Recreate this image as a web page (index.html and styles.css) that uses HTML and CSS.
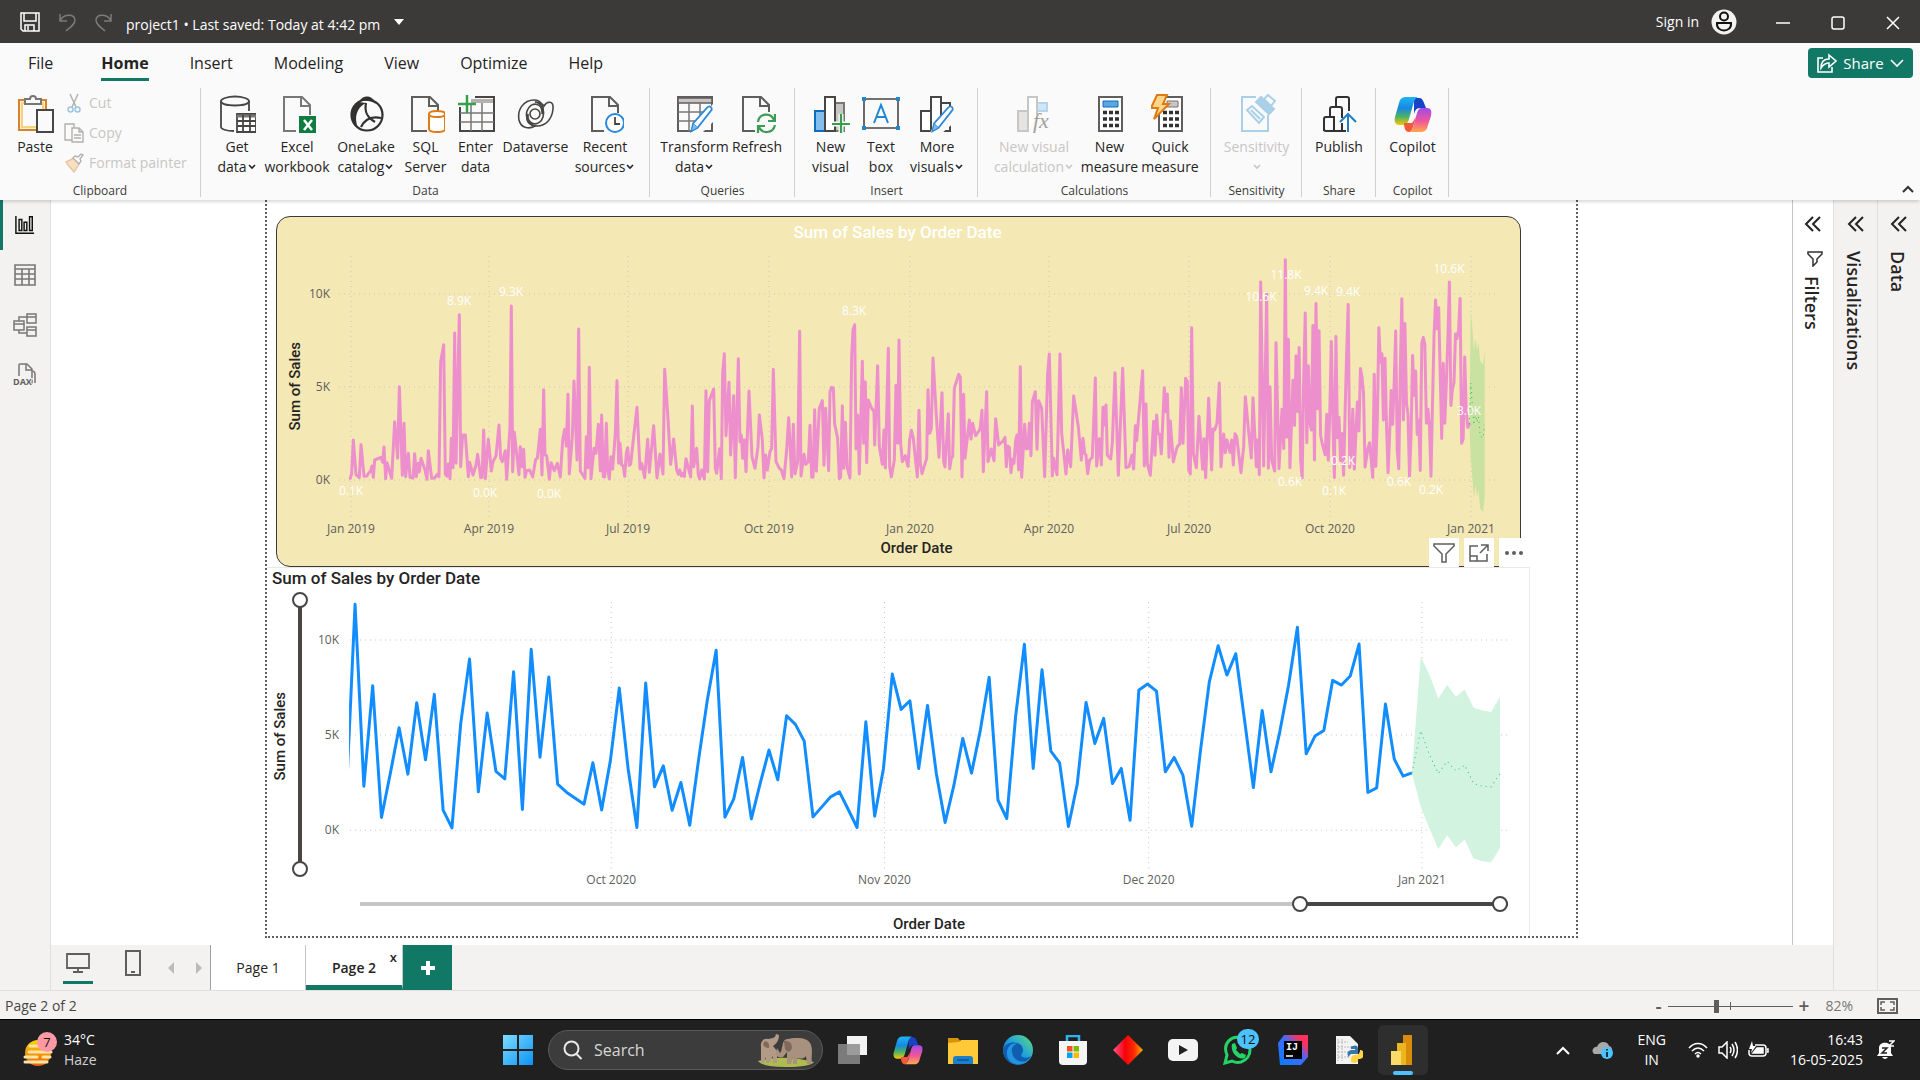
FILE: index.html
```html
<!DOCTYPE html>
<html lang="en">
<head>
<meta charset="utf-8">
<title>project1</title>
<link rel="stylesheet" href="styles.css">
</head>
<body>
<svg class="defs" aria-hidden="true">
  <defs>
    <linearGradient id="cpBlue" x1="0" y1="0" x2="0" y2="1"><stop offset="0" stop-color="#1fb4f5"/><stop offset=".4" stop-color="#1788e0"/><stop offset=".7" stop-color="#4bb265"/><stop offset="1" stop-color="#f8c800"/></linearGradient>
    <linearGradient id="cpPink" x1="0" y1="0" x2="0" y2="1"><stop offset="0" stop-color="#a04be8"/><stop offset=".55" stop-color="#f0569b"/><stop offset="1" stop-color="#ffa94a"/></linearGradient>
    <linearGradient id="edgeG" x1="0" y1="1" x2="1" y2="0"><stop offset="0" stop-color="#0c59a4"/><stop offset=".5" stop-color="#1e9de0"/><stop offset="1" stop-color="#5fe07a"/></linearGradient>
    <linearGradient id="winG" x1="0" y1="0" x2="1" y2="1"><stop offset="0" stop-color="#7fdcff"/><stop offset="1" stop-color="#0a93f5"/></linearGradient>
    <linearGradient id="redG"><stop offset="0" stop-color="#ff5a8a"/><stop offset=".4" stop-color="#f5000c"/><stop offset=".7" stop-color="#ff2a00"/><stop offset="1" stop-color="#ffb000"/></linearGradient>
    <linearGradient id="ijG" x1="0" y1="1" x2="1" y2="0"><stop offset="0" stop-color="#087cfa"/><stop offset=".55" stop-color="#3f6bff"/><stop offset=".8" stop-color="#fe315d"/></linearGradient>
    <linearGradient id="hazeG" x1="0" y1="0" x2="0" y2="1"><stop offset="0" stop-color="#ffd400"/><stop offset="1" stop-color="#e8620c"/></linearGradient>
    <symbol id="copilot" viewBox="0 0 38 38">
      <path d="M20 3h5c3 0 4 2 5 5l2 5h-6c-4 0-5 3-6 6z" fill="#1743c8"/>
      <path d="M12 2h12c-3 1-4 4-5 8l-4 14c-1 4-3 6-7 6H5c-4 0-5-4-4-8L5 8c1-4 3-6 7-6z" fill="url(#cpBlue)"/>
      <path d="M10 28h8l4-6-3 10c-1 3-2 5-4 5-4 0-5-5-5-9z" fill="#f4583c"/>
      <path d="M28 13h5c4 0 5 3 4 8l-3 9c-1 5-3 7-7 7H15c3-1 4-4 5-8l3-11c1-3 2-5 5-5z" fill="url(#cpPink)"/>
    </symbol>
    <symbol id="chev" viewBox="0 0 10 8"><path d="M2 2l3 3 3-3" fill="none" stroke="currentColor" stroke-width="1.600"/></symbol>
    <symbol id="collapse" viewBox="0 0 18 18"><path d="M9 2L2 9l7 7M16 2L9 9l7 7" fill="none" stroke="currentColor" stroke-width="2"/></symbol>
    <symbol id="pencil" viewBox="0 0 26 32"><path d="M2 30l2-9L20 3q3-3 5 0 1 2-1 4L9 26z" fill="#fff" stroke="#2b88d8" stroke-width="2"/><path d="M2 30l2-9 5 5z" fill="#7cbdec" stroke="#2b88d8"/></symbol>
  </defs>
</svg>

<header class="titlebar">
  <button class="tb-icon" aria-label="Save"><svg width="20" height="20" viewBox="0 0 20 20" fill="none" stroke="#fff" stroke-width="1.5"><path d="M1 1h18v18H3l-2-2zM4 1v8h12V1M5 19v-6h9v6M8 14v4"/></svg></button>
  <button class="tb-icon" aria-label="Undo"><svg width="18" height="20" viewBox="0 0 18 20" fill="none" stroke="#7d7b79" stroke-width="1.5"><path d="M2 2v7h7M2 9c3-7 14-8 15-1 0 4-4 7-9 11"/></svg></button>
  <button class="tb-icon" aria-label="Redo"><svg width="18" height="20" viewBox="0 0 18 20" fill="none" stroke="#7d7b79" stroke-width="1.5"><path d="M16 2v7H9M16 9C13 2 2 1 1 8c0 4 4 7 9 11"/></svg></button>
  <span class="doc-name">project1 • Last saved: Today at 4:42 pm</span>
  <svg width="10" height="6"><path d="M0 0h10L5 6z" fill="#fff"/></svg>
  <span class="grow"></span>
  <a class="signin" href="#">Sign in</a>
  <svg width="26" height="26" viewBox="0 0 26 26"><circle cx="13" cy="13" r="12.5" fill="#f3f2f1"/><circle cx="13" cy="7.500" r="4" fill="none" stroke="#111" stroke-width="2"/><path d="M6 14h14c1 10-15 10-14 0z" fill="none" stroke="#111" stroke-width="2"/></svg>
  <div class="win-buttons">
    <button aria-label="Minimize"><svg width="14" height="14"><path d="M0 7h14" stroke="#fff" stroke-width="1.500"/></svg></button>
    <button aria-label="Maximize"><svg width="14" height="14"><rect x="1" y="1" width="12" height="12" rx="2" fill="none" stroke="#fff" stroke-width="1.500"/></svg></button>
    <button aria-label="Close"><svg width="14" height="14"><path d="M1 1l12 12M13 1L1 13" stroke="#fff" stroke-width="1.500"/></svg></button>
  </div>
</header>

<nav class="menu">
  <a href="#">File</a><a href="#" class="active">Home</a><a href="#">Insert</a><a href="#">Modeling</a><a href="#">View</a><a href="#">Optimize</a><a href="#">Help</a>
  <span class="grow"></span>
  <button class="share"><svg width="20" height="20" viewBox="0 0 20 20" fill="none" stroke="#fff" stroke-width="1.600"><path d="M6 5H1v14h14v-5"/><path d="M12 2l7 6-7 6v-4c-4 0-6 2-8 5 0-6 3-9 8-9z"/></svg>Share<svg width="14" height="9" viewBox="0 0 14 9"><path d="M1 1l6 6 6-6" fill="none" stroke="#fff" stroke-width="1.600"/></svg></button>
</nav>

<section class="ribbon">
  <div class="group clipboard">
    <div class="tools">
      <button class="tool"><svg viewBox="0 0 38 38"><path d="M3 5h27v30H3z" fill="#fdf0cf" stroke="#d9822b" stroke-width="2"/><path d="M6 8h21v24H6z" fill="#fafafa" stroke="#f5d27f" stroke-width="2"/><path d="M9 9V4h5c0-4 6-4 6 0h5v5z" fill="#fafafa" stroke="#797775" stroke-width="2"/><path d="M21 15h16v22H21z" fill="#fafafa" stroke="#484644" stroke-width="2"/></svg>Paste</button>
      <div class="small-tools">
        <button class="small-tool"><svg viewBox="0 0 20 20" fill="none"><path d="M6 1l6 13M14 1L8 14" stroke="#b3b0ad" stroke-width="1.500"/><circle cx="6.500" cy="16.500" r="2.500" stroke="#9cc5e2" stroke-width="1.500"/><circle cx="13.500" cy="16.500" r="2.500" stroke="#9cc5e2" stroke-width="1.500"/></svg>Cut</button>
        <button class="small-tool"><svg viewBox="0 0 20 20" fill="#fafafa" stroke="#b3b0ad" stroke-width="1.400"><path d="M1 1h9v16H1z"/><path d="M8 5h7l4 4v10H8zM15 5v4h4M10 12h7M10 15h7"/></svg>Copy</button>
        <button class="small-tool"><svg viewBox="0 0 20 20" fill="none" stroke="#b3b0ad" stroke-width="1.400"><path d="M2 9l8-4 5 6-5 8C8 16 4 13 2 9z" fill="#f8dfc3" stroke="#e8c49c"/><path d="M9 5l6 6 2-3-1-2 3-4-2-1-3 3-3-1z" fill="#fafafa"/></svg>Format painter</button>
      </div>
    </div>
    <h2>Clipboard</h2>
  </div>
  <div class="group">
    <div class="tools">
      <button class="tool w52"><svg viewBox="0 0 38 38" fill="none" stroke="#484644" stroke-width="1.800"><path d="M16 36C8 36 3 34 3 32V6c0-2 6-4.500 14-4.500S31 4 31 6v10"/><path d="M3 6c0 6 28 6 28 0" /><path d="M19 19h19v18H19z" fill="#fff"/><path d="M19 21h19" stroke="#797775" stroke-width="3"/><path d="M19 26h19M19 31h19M25 20v17M32 20v17"/></svg>Get<span>data<svg class="chev"><use href="#chev"/></svg></span></button>
      <button class="tool w68"><svg viewBox="0 0 38 38"><path d="M18 36H6V2h18l8 8v10M23 2v9h9" fill="none" stroke="#797775" stroke-width="2"/><path d="M21 21h18v17H21z" fill="#107c41"/><path d="M26 25l8 10M34 25l-8 10" stroke="#fff" stroke-width="2.500"/></svg>Excel<span>workbook</span></button>
      <button class="tool w70"><svg viewBox="0 0 38 38"><circle cx="20" cy="20" r="15.500" fill="none" stroke="#323130" stroke-width="2.200"/><path d="M12 7c4-8 14-7 17 2-6-4-12-4-17-2zM12 7C3 13 2 28 11 33c-4-10-2-20 8-25z" fill="#323130"/><path d="M19 8c-2 10 2 15 9 19M14 32c4-8 11-11 20-9" fill="none" stroke="#323130" stroke-width="2.200"/></svg>OneLake<span>catalog<svg class="chev"><use href="#chev"/></svg></span></button>
      <button class="tool w49"><svg viewBox="0 0 38 38"><path d="M20 36H5V2h18l8 8v6M22 2v9h9" fill="none" stroke="#605e5c" stroke-width="2"/><path d="M22 19v15c0 4 16 4 16 0V19c0-4-16-4-16 0zc0 4 16 4 16 0" fill="#fff" stroke="#e07a12" stroke-width="2"/></svg>SQL<span>Server</span></button>
      <button class="tool w51"><svg viewBox="0 0 38 38"><path d="M3 12v24h34V2H18" fill="none" stroke="#484644" stroke-width="2"/><path d="M14 4h22v4H14z" fill="#b3b0ad"/><path d="M3 18h34M3 27h34M14 10v26M25 8v28" fill="none" stroke="#797775" stroke-width="1.500"/><path d="M10 0v18M1 9h18" stroke="#359f4c" stroke-width="2.500"/></svg>Enter<span>data</span></button>
      <button class="tool w69"><svg viewBox="0 0 38 38" fill="none" stroke="#484644" stroke-width="1.600"><circle cx="18" cy="19" r="5"/><path d="M25 19C26 7 13 6 10 16c-2 7 2 14 8 15C13 34 4 34 2 25 0 14 7 5 17 5c8 0 11 8 8 14z"/><path d="M11 19c-1 12 12 13 15 3 2-7-2-14-8-15 3 0 7 1 9 4 3-5 10-6 9 3-1 10-7 17-16 17-8 0-12-5-9-12z"/></svg>Dataverse</button>
      <button class="tool w70"><svg viewBox="0 0 38 38"><path d="M18 36H6V2h18l8 8v8M23 2v9h9" fill="none" stroke="#605e5c" stroke-width="2"/><circle cx="29" cy="28" r="9" fill="#fff" stroke="#2b88d8" stroke-width="2"/><path d="M29 22v7h5" fill="none" stroke="#484644" stroke-width="1.800"/></svg>Recent<span>sources<svg class="chev"><use href="#chev"/></svg></span></button>
    </div>
    <h2>Data</h2>
  </div>
  <div class="group">
    <div class="tools">
      <button class="tool w69"><svg viewBox="0 0 38 38"><path d="M2 2h34v34H2z" fill="none" stroke="#605e5c" stroke-width="2"/><path d="M2 3h34v5H2z" fill="#c8c6c4" stroke="#605e5c" stroke-width="1.500"/><path d="M2 17h34M2 26h30M13 8v28M24 8v28" stroke="#797775" stroke-width="1.500"/><path d="M14 38l5-10 18-19v18L26 38z" fill="#fafafa"/><use href="#pencil" x="12" y="10" width="26" height="28"/></svg>Transform<span>data<svg class="chev"><use href="#chev"/></svg></span></button>
      <button class="tool w56"><svg viewBox="0 0 38 38"><path d="M17 36H5V2h18l8 8v7M22 2v9h9" fill="none" stroke="#605e5c" stroke-width="2"/><path d="M20 27c1-9 13-10 16-2M37 30c-2 9-13 9-16 2" fill="none" stroke="#3e9b55" stroke-width="2.200"/><path d="M37 19v7h-7M20 38v-7h7" fill="none" stroke="#3e9b55" stroke-width="2.200"/></svg>Refresh</button>
    </div>
    <h2>Queries</h2>
  </div>
  <div class="group">
    <div class="tools">
      <button class="tool w51"><svg viewBox="0 0 38 38"><path d="M3 16h10v20H3z" fill="#83beec" stroke="#0f6cbd" stroke-width="2"/><path d="M23 8h9v28h-9z" fill="#c8c6c4" stroke="#797775" stroke-width="2"/><path d="M13 2h10v34H13z" fill="#fff" stroke="#484644" stroke-width="2"/><path d="M29 19v19M20 29h18" stroke="#fafafa" stroke-width="5"/><path d="M29 19v19M20 29h18" stroke="#359f4c" stroke-width="2.200"/></svg>New<span>visual</span></button>
      <button class="tool w50"><svg viewBox="0 0 38 38"><path d="M2 4h34v29H2z" fill="none" stroke="#484644" stroke-width="1.600"/><path d="M0 2h4v4H0zM34 2h4v4h-4zM0 31h4v4H0zM34 31h4v4h-4z" fill="#1f87d1"/><path d="M12 28l7-18 7 18M14 22h10" fill="none" stroke="#1f87d1" stroke-width="2"/></svg>Text<span>box</span></button>
      <button class="tool w62"><svg viewBox="0 0 38 38"><path d="M3 16h10v20H3zM13 2h10v34H13zM23 8h9v28h-9z" fill="#fff" stroke="#484644" stroke-width="2"/><path d="M12 38l5-10 20-19v18L24 38z" fill="#fafafa"/><use href="#pencil" x="11" y="10" width="26" height="28"/></svg>More<span>visuals<svg class="chev"><use href="#chev"/></svg></span></button>
    </div>
    <h2>Insert</h2>
  </div>
  <div class="group">
    <div class="tools">
      <button class="tool w92" disabled><svg viewBox="0 0 38 38"><path d="M3 16h10v20H3z" fill="#e6e4e2" stroke="#c8c6c4" stroke-width="2"/><path d="M22 8h10v8H22z" fill="#cfe4f5" stroke="#b5d5ec" stroke-width="2"/><path d="M13 36V2h9v18" fill="#fff" stroke="#c8c6c4" stroke-width="2"/><text x="18" y="33" class="fx">fx</text></svg>New visual<span>calculation<svg class="chev"><use href="#chev"/></svg></span></button>
      <button class="tool w59"><svg viewBox="0 0 38 38"><path d="M8 2h23v34H8z" fill="#fff" stroke="#605e5c" stroke-width="2"/><path d="M12 6h15v6H12z" fill="#5ba7e4" stroke="#0f6cbd"/><path d="M12 17.500h16M12 24h16M12 30.500h16" stroke="#323130" stroke-width="3.500" stroke-dasharray="4 2"/></svg>New<span>measure</span></button>
      <button class="tool w62"><svg viewBox="0 0 38 38"><path d="M8 2h23v34H8z" fill="#fff" stroke="#605e5c" stroke-width="2"/><path d="M16 6h11v6H16z" fill="#c8c6c4" stroke="#797775"/><path d="M12 17.500h16M12 24h16M12 30.500h16" stroke="#323130" stroke-width="3.500" stroke-dasharray="4 2"/><path d="M6 0h10l-4 9h6L3 24l4-11H0z" fill="#fdd68a" stroke="#e07a12" stroke-width="2"/></svg>Quick<span>measure</span></button>
    </div>
    <h2>Calculations</h2>
  </div>
  <div class="group">
    <div class="tools">
      <button class="tool w71" disabled><svg viewBox="0 0 38 38" fill="none" stroke="#a9d0e8" stroke-width="2"><path d="M18 2H4v34h26V20"/><path d="M9 15l5-4 12 11-5 6zM13 15l9 9"/><path d="M18 7l5-5 13 12-5 5z" fill="#a9d0e8"/><path d="M26 4l4-4 7 6-4 5z" fill="#fafafa"/></svg>Sensitivity<span><svg class="chev"><use href="#chev"/></svg></span></button>
    </div>
    <h2>Sensitivity</h2>
  </div>
  <div class="group">
    <div class="tools">
      <button class="tool w54"><svg viewBox="0 0 38 38" fill="none" stroke="#323130" stroke-width="2"><path d="M4 36V24q0-2 2-2h8v14H6q-2 0-2-2M10 22V14q0-2 2-2h8q2 0 2 2v9M16 12V4q0-2 2-2h9q2 0 2 2v12M6 36h20M14 22v14M22 28v8"/><path d="M28 37V19M20 27l8-8 8 8" stroke="#1f7fc0"/></svg>Publish</button>
    </div>
    <h2>Share</h2>
  </div>
  <div class="group">
    <div class="tools">
      <button class="tool w53"><svg><use href="#copilot"/></svg>Copilot</button>
    </div>
    <h2>Copilot</h2>
  </div>
  <button class="ribbon-toggle" aria-label="Collapse ribbon"><svg width="12" height="8"><path d="M1 7l5-5 5 5" fill="none" stroke="#323130" stroke-width="2"/></svg></button>
</section>

<main class="workspace">
  <aside class="rail">
    <button class="active" aria-label="Report view"><svg viewBox="0 0 22 22" width="20" height="20" fill="none" stroke="#111" stroke-width="1.600"><path d="M1 1v19h20M4.500 17V5h3v12zM10 17V8h3v9zM16 17V2h3v15z"/></svg></button>
    <button aria-label="Table view"><svg viewBox="0 0 22 22" width="22" height="22" fill="none" stroke="#797775" stroke-width="1.600"><path d="M1 1h20v20H1zM1 5h20M1 10h20M1 15h20M8 5v16M15 5v16"/></svg></button>
    <button aria-label="Model view"><svg viewBox="0 0 24 24" width="24" height="24" fill="none" stroke="#797775" stroke-width="1.500"><path d="M1 8h10v9H1zM1 11h10M14 1h9v9h-9zM14 4h9M14 14h9v9h-9zM14 17h9M6 8V4h8M6 17v3h8"/></svg></button>
    <button aria-label="DAX query view"><svg viewBox="0 0 24 24" width="24" height="24" fill="none" stroke="#797775" stroke-width="1.500"><path d="M6 13V2q0-1 1-1h7l5 5v13q0 2-2 2M13 1v6h6M20 8q2 1 2 3v9"/><text x="0" y="22" class="dax">DAX</text></svg></button>
  </aside>

  <div class="center">
    <div class="canvas">
      <div class="report">
        <article class="visual top">
          <h3>Sum of Sales by Order Date</h3>
          <div class="plot-row">
            <span class="y-title">Sum of Sales</span>
            <svg class="plot" id="fullChart" viewBox="310 244 1200 294">
              <g class="grid">
                <path d="M339 294H1495M339 387H1495M339 480H1495M351 256V518M489 256V518M628 256V518M769 256V518M910 256V518M1049 256V518M1189 256V518M1330 256V518M1471 256V518"/>
              </g>
              <g transform="translate(260 240) scale(.33333)">
                <polygon id="fullBand" class="band dim"/>
                <polyline id="fullLine" class="pink"/>
                <polyline id="fullMid" class="mid wide"/>
              </g>
              <g class="ticks end"><text x="330" y="298">10K</text><text x="330" y="391">5K</text><text x="330" y="484">0K</text></g>
              <g class="ticks"><text x="351" y="533">Jan 2019</text><text x="489" y="533">Apr 2019</text><text x="628" y="533">Jul 2019</text><text x="769" y="533">Oct 2019</text><text x="910" y="533">Jan 2020</text><text x="1049" y="533">Apr 2020</text><text x="1189" y="533">Jul 2020</text><text x="1330" y="533">Oct 2020</text><text x="1471" y="533">Jan 2021</text></g>
              <g class="ticks white"><text x="351" y="495">0.1K</text><text x="459" y="305">8.9K</text><text x="511" y="296">9.3K</text><text x="485" y="497">0.0K</text><text x="549" y="498">0.0K</text><text x="854" y="315">8.3K</text><text x="1261" y="301">10.6K</text><text x="1286" y="279">11.8K</text><text x="1316" y="295">9.4K</text><text x="1348" y="296">9.4K</text><text x="1449" y="273">10.6K</text><text x="1469" y="415">3.0K</text><text x="1343" y="465">0.2K</text><text x="1290" y="486">0.6K</text><text x="1334" y="495">0.1K</text><text x="1399" y="486">0.6K</text><text x="1431" y="494">0.2K</text></g>
            </svg>
          </div>
          <p class="x-title">Order Date</p>
        </article>

        <article class="visual bottom">
          <div class="visual-tools">
            <button aria-label="Filters"><svg viewBox="0 0 22 20" width="22" height="20"><path d="M1 1h20v2l-8 8v8H9v-8L1 3z"/></svg></button>
            <button aria-label="Focus mode"><svg viewBox="0 0 20 18" width="20" height="18"><path d="M9 2H1v15h17v-7M1 12h7v5M12 1h7v6M19 1l-8 8"/></svg></button>
            <button aria-label="More options"><svg viewBox="0 0 20 6" width="20" height="6" class="dots"><circle cx="3" cy="3" r="2"/><circle cx="10" cy="3" r="2"/><circle cx="17" cy="3" r="2"/></svg></button>
          </div>
          <h3>Sum of Sales by Order Date</h3>
          <div class="plot-row">
            <span class="y-title">Sum of Sales</span>
            <div class="dual vertical">
              <input type="range" min="0" max="100" value="0" aria-label="Lowest sales shown">
              <input type="range" min="0" max="100" value="100" aria-label="Highest sales shown">
            </div>
            <svg class="plot" viewBox="312 591 1200 297">
              <defs><clipPath id="plotClip"><path d="M349 591H1512V888H349z"/></clipPath></defs>
              <g class="grid"><path d="M350 640H1510M350 735H1510M350 830H1510M611 602V869M884 602V869M1148 602V869M1421 602V869"/></g>
              <polygon id="zoomBand" class="band"/>
              <polyline id="zoomLine" class="blue" clip-path="url(#plotClip)"/>
              <polyline id="zoomMid" class="mid"/>
              <g class="ticks end"><text x="339" y="644">10K</text><text x="339" y="739">5K</text><text x="339" y="834">0K</text></g>
              <g class="ticks"><text x="611" y="884">Oct 2020</text><text x="884" y="884">Nov 2020</text><text x="1148" y="884">Dec 2020</text><text x="1421" y="884">Jan 2021</text></g>
            </svg>
          </div>
          <div class="dual horizontal">
            <input type="range" min="0" max="1000" value="823" aria-label="First date shown">
            <input type="range" min="0" max="1000" value="1000" aria-label="Last date shown">
          </div>
          <p class="x-title">Order Date</p>
        </article>
      </div>
      <aside class="filters">
        <button aria-label="Expand filters"><svg width="18" height="18"><use href="#collapse"/></svg></button>
        <svg width="16" height="16" viewBox="0 0 16 16" class="funnel"><path d="M1 1h14v2l-5 5v3l-4 4V8L1 3z" fill="none" stroke="#323130" stroke-width="1.500"/></svg>
        <h2>Filters</h2>
      </aside>
    </div>
    <div class="page-bar">
      <button class="device active" aria-label="Desktop layout"><svg width="24" height="20" viewBox="0 0 24 20" fill="none" stroke="#605e5c" stroke-width="1.800"><path d="M1 1h22v14H1zM12 15v4M7 19h10"/></svg></button>
      <button class="device" aria-label="Mobile layout"><svg width="16" height="26" viewBox="0 0 16 26" fill="none" stroke="#605e5c" stroke-width="2"><path d="M1 1h14v24H1zM6 22h4"/></svg></button>
      <button class="arrow" aria-label="Previous page"><svg width="6" height="12"><path d="M6 0v12L0 6z" fill="#bdbbb9"/></svg></button>
      <button class="arrow" aria-label="Next page"><svg width="6" height="12"><path d="M0 0v12l6-6z" fill="#bdbbb9"/></svg></button>
      <button class="page">Page 1</button>
      <div class="page current"><button>Page 2</button><button class="close" aria-label="Delete page">x</button></div>
      <button class="add" aria-label="New page"><svg width="14" height="14"><path d="M7 0v14M0 7h14" stroke="#fff" stroke-width="4"/></svg></button>
    </div>
  </div>
  <aside class="pane">
    <button aria-label="Expand visualizations"><svg width="18" height="18"><use href="#collapse"/></svg></button>
    <h2>Visualizations</h2>
  </aside>
  <aside class="pane last">
    <button aria-label="Expand data"><svg width="18" height="18"><use href="#collapse"/></svg></button>
    <h2>Data</h2>
  </aside>
</main>

<footer class="status">
  <span>Page 2 of 2</span>
  <span class="grow"></span>
  <button aria-label="Zoom out">-</button>
  <input class="zoom" type="range" min="10" max="200" value="83" aria-label="Zoom">
  <button aria-label="Zoom in">+</button>
  <span class="pct">82%</span>
  <button aria-label="Fit to page"><svg width="21" height="16" viewBox="0 0 21 16" fill="none" stroke="#605e5c"><path d="M1 1h19v14H1z" stroke-width="2"/><path d="M4 7V4h4M13 4h4v3M17 9v3h-4M8 12H4V9" stroke-width="1.500"/></svg></button>
</footer>

<div class="taskbar">
  <div class="weather">
    <svg width="38" height="38" viewBox="0 0 38 38"><circle cx="15" cy="22" r="13" fill="url(#hazeG)"/><path d="M7 15h8M6 21h22M2 26h12M20 26h7M2 31h22" stroke="#fde3a7" stroke-width="3" stroke-linecap="round"/><circle cx="24" cy="11" r="10" fill="#ff99a4"/><text x="24" y="16" class="badge-text">7</text></svg>
    <div><b>34°C</b><span>Haze</span></div>
  </div>
  <div class="apps">
    <button aria-label="Start"><svg viewBox="0 0 30 30"><path d="M0 0h14v14H0zM16 0h14v14H16zM0 16h14v14H0zM16 16h14v14H16z" fill="url(#winG)"/></svg></button>
    <label class="search">
      <svg width="20" height="20" viewBox="0 0 20 20" fill="none" stroke="#e8e8e8" stroke-width="2"><circle cx="8.500" cy="8.500" r="7"/><path d="M13.500 14l5 5"/></svg>
      <input type="text" placeholder="Search" aria-label="Search">
      <svg width="56" height="34" viewBox="0 0 56 34"><path d="M0 28q26-7 56 1-4 5-28 5T0 28z" fill="#aebb4f"/><path d="M3 29V14C2 8 6 5 10 6c4-1 7 0 8-5l3 1c0 6-3 9-6 11l4 5v12h-4v-7l-4 7H8v-6l-2 6z" fill="#b39a87"/><path d="M29 31V19l-4 5q-6 2-7-4l1-5 3 5c3-2 1-13 7-14 9-2 22-2 24 6 2 6 0 10 1 19h-5l-1-8c-2 3-6 3-9 2v6h-4v-7l-2 7z" fill="#a8917f"/><path d="M26 8q8-1 8 7-3 7-7 1zM7 8q5 1 4 7-5 0-6-4z" fill="#81695a"/></svg>
    </label>
    <button aria-label="Task view"><svg viewBox="0 0 30 30"><path d="M9 1h20v19H9z" fill="#f3f3f3"/><path d="M0 9h22v20H0z" fill="#8c8c8c" opacity=".85"/></svg></button>
    <button aria-label="Copilot"><svg><use href="#copilot"/></svg></button>
    <button aria-label="File Explorer"><svg viewBox="0 0 30 30"><path d="M0 3h10l3 4v5H0z" fill="#d9930a"/><path d="M0 8l11-1 2-2h17v24H0z" fill="#ffc938"/><path d="M5 29v-5q0-3 3-3h14q3 0 3 3v5z" fill="#1c7fcb"/><path d="M9 25h12" stroke="#0b5696" stroke-width="1.500"/></svg></button>
    <button aria-label="Edge"><svg viewBox="0 0 30 30"><circle cx="15" cy="15" r="15" fill="url(#edgeG)"/><path d="M0 15C2 5 20 5 20 15c0 3-2 4-2 5 0 3 6 4 10 1-8 13-28 9-28-6z" fill="#0f5eb0"/><path d="M9 17c1 8 8 11 15 9-7 6-19 3-20-6-1-8 5-13 10-11-4 1-6 4-5 8z" fill="#2394df"/></svg></button>
    <button aria-label="Store"><svg viewBox="0 0 30 30"><path d="M9 7V1h12v6" fill="none" stroke="#2fb3f0" stroke-width="2.500"/><path d="M1 6h28v20q0 4-4 4H5q-4 0-4-4z" fill="#f5f5f5"/><path d="M9 11h5.500v5.500H9z" fill="#f25022"/><path d="M15.500 11H21v5.500h-5.500z" fill="#7fba00"/><path d="M9 17.500h5.500V23H9z" fill="#00a4ef"/><path d="M15.500 17.500H21V23h-5.500z" fill="#ffb900"/></svg></button>
    <button aria-label="Diamond"><svg viewBox="0 0 30 30"><path d="M15 0l15 15-15 15L0 15z" fill="url(#redG)"/></svg></button>
    <button aria-label="YouTube"><svg viewBox="0 0 30 30"><rect y="4" width="30" height="22" rx="5" fill="#f4f4f4"/><path d="M11 10l9 5-9 5z" fill="#222"/></svg></button>
    <button class="wa" aria-label="WhatsApp"><svg viewBox="0 0 30 30"><path d="M2 28l2-8C-1 8 9 0 18 3c12 4 12 20 0 24-4 1-7 0-9-1z" fill="none" stroke="#25d366" stroke-width="3"/><path d="M9 9l3-1 2 5-1 2 4 4 2-1 4 2-1 3c-7 3-15-6-13-14z" fill="#25d366"/></svg><i>12</i></button>
    <button aria-label="IntelliJ IDEA"><svg viewBox="0 0 30 30"><path d="M0 8l6-8h24v22l-7 8H2z" fill="url(#ijG)"/><path d="M6 6h18v18H6z" fill="#000"/><text x="8" y="15" class="ij">IJ</text><path d="M8 21h7" stroke="#fff" stroke-width="1.500"/></svg></button>
    <button aria-label="Python"><svg viewBox="0 0 30 30"><path d="M3 1h14l8 8v20H3z" fill="#f3f3f3"/><path d="M5 4v22M9 4v22M5 7h10M5 12h15M5 17h10M5 22h10" stroke="#bbb" stroke-dasharray="2 1"/><path d="M20 11q5-2 5 3v5h-6q-3 0-3 4-4-7 2-8h4v-1h-4q-1-3 2-3z" fill="#3776ab"/><path d="M27 15q5 0 3 7-1 2-5 2 1 3-3 4-5 0-4-4 0-4 4-4 5 0 5-5z" fill="#ffd343"/></svg></button>
    <button class="running" aria-label="Power BI"><svg viewBox="0 0 30 30"><path d="M15 0h9v30h-9z" fill="#d98c0b"/><path d="M9 8h9v22H9z" fill="#edb61e"/><path d="M3 16h10v14H3z" fill="#fadb6a"/></svg></button>
  </div>
  <div class="tray">
    <svg width="14" height="9"><path d="M1 8l6-6 6 6" fill="none" stroke="#fff" stroke-width="2"/></svg>
    <svg class="cloud" width="22" height="18" viewBox="0 0 22 18"><path d="M2 13c-4-4 1-8 3-7 2-7 11-6 12-1 4 1 4 6 1 8z" fill="#a9a9a9"/><circle cx="15" cy="12" r="6" fill="#4cc2ff"/><path d="M15 8v1.500M15 11v5" stroke="#10334a" stroke-width="2"/></svg>
    <div class="lang">ENG<br>IN</div>
    <svg width="20" height="16" viewBox="0 0 20 16" fill="none" stroke="#fff" stroke-width="1.500"><path d="M1 6c5-6 13-6 18 0M4 9c4-4 8-4 12 0M7 12c2-2 4-2 6 0"/><circle cx="10" cy="14" r="1" fill="#fff"/></svg>
    <svg width="20" height="18" viewBox="0 0 20 18" fill="none" stroke="#fff" stroke-width="1.500"><path d="M1 6h3l5-5v16l-5-5H1zM12 6q2 3 0 6M14 3q4 6 0 12M17 1q5 8 0 16"/></svg>
    <svg width="21" height="18" viewBox="0 0 21 18" fill="none" stroke="#fff" stroke-width="1.500"><path d="M7 4h8q3 0 3 3v5q0 3-3 3H4q-3 0-3-3V9M19 8h1v3h-1"/><path d="M9 7h6v5H5z" fill="#fff"/><path d="M4 0L1 8h3l-1 4 5-7H5z" fill="#fff" stroke="none"/></svg>
    <time>16:43<br>16-05-2025</time>
    <svg class="bell" width="18" height="20" viewBox="0 0 18 20"><path d="M0 16l2-3V8c0-7 12-7 12 0v5l2 3zM5 17h6q-3 4-6 0z" fill="#fff"/><path d="M5 8h5l-5 5h5" fill="none" stroke="#222" stroke-width="1.500"/><path d="M12 1h5l-5 5h5" fill="none" stroke="#fff" stroke-width="1.500"/></svg>
  </div>
</div>
<script src="charts.js"></script>
</body>
</html>
```
FILE: styles.css
```css
* { box-sizing: border-box; }
body { margin: 0; min-height: 100vh; display: flex; flex-direction: column; font: 14px/20px "Open Sans", "Noto Sans", sans-serif; color: #252423; background: #f3f2f1; }
button { font: inherit; color: inherit; background: none; border: 0; padding: 0; margin: 0; }
a { color: inherit; text-decoration: none; }
h2, h3, p { margin: 0; font-weight: 400; }
svg { display: block; flex: none; }
.defs { position: absolute; width: 0; height: 0; }
.grow { flex: 1; }

.titlebar { height: 43px; background: #3b3a39; color: #fff; display: flex; align-items: center; padding-left: 20px; }
.tb-icon { margin-right: 18px; }
.tb-icon + .tb-icon { margin-right: 19px; }
.doc-name { padding: 6px 14px 0 0; margin-left: -6px; }
.signin { margin-right: 12px; }
.win-buttons { display: flex; padding: 2px 0 0 18px; }
.win-buttons button { width: 55px; display: grid; place-items: center; }

.menu { height: 42px; background: #fafafa; display: flex; align-items: flex-start; padding: 0 7px 0 28px; font-size: 16px; line-height: 40px; gap: 41px; }
.menu a { height: 38px; }
.menu a:first-child { margin-right: 7px; }
.menu .active { font-weight: 700; border-bottom: 3px solid #117865; }
.share { margin-top: 5px; width: 105px; height: 30px; border-radius: 4px; background: #117865; color: #fff; font-size: 15px; display: flex; align-items: center; justify-content: center; gap: 6px; line-height: 20px; }

.ribbon { height: 115px; background: #fafafa; display: flex; padding-top: 3px; position: relative; z-index: 1; box-shadow: 0 3px 3px -1px rgba(0,0,0,.15); }
.group { height: 109px; border-right: 1px solid #d2d0ce; padding: 6px 9px 0 10px; display: flex; flex-direction: column; }
.group h2 { font-size: 12px; line-height: 14px; text-align: center; color: #3b3a39; margin-top: 4px; }
.group.clipboard { width: 201px; padding-left: 16px; padding-right: 0; }
.group.clipboard h2 { padding-right: 16px; }
.tools { display: flex; }
.tool { display: flex; flex-direction: column; align-items: center; white-space: nowrap; height: 86px; }
.tool > svg { width: 38px; height: 40px; margin-bottom: 3px; }
.tool span { display: flex; align-items: center; min-height: 20px; justify-content: center; }
.tool .chev { width: 10px; height: 8px; }
.tool[disabled], .small-tool { color: #c8c6c4; }
.fx { font: italic 22px "Liberation Serif", serif; fill: #a19f9d; }
.w49 { width: 49px; } .w50 { width: 50px; } .w51 { width: 51px; } .w52 { width: 52px; } .w53 { width: 53px; } .w54 { width: 54px; }
.w56 { width: 56px; } .w59 { width: 59px; } .w62 { width: 62px; } .w68 { width: 68px; } .w69 { width: 69px; } .w70 { width: 70px; } .w71 { width: 71px; } .w92 { width: 92px; }
.small-tools { display: flex; flex-direction: column; gap: 10px; padding-left: 10px; }
.small-tool { display: flex; align-items: center; gap: 5px; white-space: nowrap; }
.small-tool svg { width: 20px; height: 20px; }
.clipboard .tools { align-items: flex-start; }
.clipboard .small-tools { margin-top: -1px; }
.ribbon-toggle { margin: auto 6px 7px auto; }

.workspace { flex: 1; display: flex; min-height: 790px; }
.rail { width: 51px; border-right: 1px solid #e1dfdd; display: flex; flex-direction: column; }
.rail button { height: 50px; display: grid; place-items: center; border-left: 3px solid transparent; padding-right: 4px; }
.rail .active { border-color: #117865; }
.dax { font: bold 9px "Open Sans", sans-serif; fill: #605e5c; stroke: #f3f2f1; stroke-width: 2px; paint-order: stroke; }
.center { flex: 1; display: flex; flex-direction: column; min-width: 0; }
.canvas { flex: 1; background: #fff; display: flex; justify-content: center; align-items: flex-start; }
.report { flex: 0 1 1313px; margin: 0 auto; border: 2px dotted #605e5c; border-top: 0; height: 738px; }

.visual { position: relative; }
.visual h3 { font: 500 17px/20px Roboto, sans-serif; }
.visual.top { margin: 16px 55px 0 9px; height: 351px; border: 1px solid #3b3a39; border-radius: 14px; background: #f4e8b4; padding: 5px 10px 0 8px; }
.visual.top h3 { color: #fff; text-align: center; }
.plot-row { display: flex; align-items: center; }
.y-title { writing-mode: vertical-rl; transform: rotate(180deg); font: 500 15px/20px Roboto, sans-serif; flex: none; width: 20px; }
.plot { flex: 1; min-width: 0; width: 100%; }
.visual.top .plot { margin-left: 5px; }
.visual.top .plot-row { margin-top: 2px; }
.visual.top .y-title { margin-bottom: 10px; }
.x-title { font: 500 15px/20px Roboto, sans-serif; text-align: center; }
.visual.top .x-title { margin-left: 38px; }
.visual.bottom { margin-right: 46px; height: 369px; border: 1px solid #ebe9e8; border-width: 1px 1px 0 0; padding: 0 16px 0 3px; background: #fff; }
.visual.bottom h3 { padding-left: 2px; }
.visual.bottom .plot-row { margin-top: 3px; }
.visual.bottom .y-title { margin-bottom: 6px; }
.grid path { stroke: #c8c6c4; stroke-dasharray: 1 4; fill: none; }
.ticks text { font: 12px "Open Sans", sans-serif; fill: #605e5c; text-anchor: middle; }
.ticks.end text { text-anchor: end; }
.ticks.white text { fill: #fff; }
.pink { fill: none; stroke: #ed8fcc; stroke-width: 9; stroke-linejoin: round; stroke-linecap: round; }
.blue { fill: none; stroke: #118dff; stroke-width: 3; stroke-linejoin: round; }
.band { fill: #d2f3df; }
.band.dim { fill: #c9e1a1; }
.mid { fill: none; stroke: #1ec96a; stroke-width: 1; stroke-dasharray: 1 4; }
.mid.wide { stroke-width: 3; stroke-dasharray: 3 12; }

.dual { display: grid; }
.dual input { grid-area: 1 / 1; appearance: none; background: none; margin: 0; pointer-events: none; }
.dual input::-webkit-slider-thumb { appearance: none; pointer-events: auto; width: 16px; height: 16px; box-sizing: border-box; border: 2px solid #484644; border-radius: 50%; background: #fff; }
.dual.vertical { width: 16px; height: 285px; margin: 0 4px 11px 2px; background: linear-gradient(#484644, #484644) center / 4px 260px no-repeat; }
.dual.vertical input { writing-mode: vertical-lr; direction: rtl; width: 16px; height: 285px; }
.dual.horizontal { height: 16px; margin: 8px 5px 0 90px; background: linear-gradient(90deg, #c8c6c4 82%, #484644 82%) center / 100% 4px no-repeat; }
.visual.bottom .x-title { margin-left: 75px; padding-top: 2px; }
.visual-tools { position: absolute; right: 0; top: -30px; display: flex; gap: 5px; }
.visual-tools button { width: 30px; height: 29px; background: #fff; display: grid; place-items: center; }
.visual-tools path { fill: none; stroke: #605e5c; stroke-width: 1.5; }
.visual-tools circle { fill: #605e5c; }

.filters, .pane { border-left: 1px solid #c8c6c4; display: flex; flex-direction: column; align-items: center; padding-top: 15px; }
.filters { width: 41px; align-self: stretch; }
.pane { width: 44px; border-color: #e1dfdd; }
.pane.last { width: 43px; }
.filters h2, .pane h2 { writing-mode: vertical-rl; font-size: 18px; font-weight: 600; line-height: 24px; margin-right: 3px; }
.filters .funnel { margin: 18px 0 9px 4px; }
.pane h2 { margin-top: 18px; }

.page-bar { height: 45px; display: flex; padding-left: 12px; align-items: stretch; }
.device { width: 30px; margin-right: 27px; display: grid; place-items: center; padding-bottom: 4px; margin-bottom: 6px; }
.device.active { border-bottom: 3px solid #117865; padding-bottom: 1px; }
.device + .device { margin-right: 10px; width: 28px; margin-left: -1px; }
.arrow { width: 28px; display: grid; place-items: center; }
.arrow + .page { border-left: 1px solid #a19f9d; margin-left: -3px; }
.page { width: 96px; background: #fff; border-right: 1px solid #c8c6c4; text-align: center; }
.page.current { width: 97px; border-bottom: 5px solid #117865; font-weight: 600; position: relative; display: grid; place-items: center; padding-top: 5px; }
.close { position: absolute; right: 5px; top: 2px; font-size: 13px; }
.add { width: 49px; background: #117865; display: grid; place-items: center; }

.status { height: 29px; border-top: 1px solid #e1dfdd; display: flex; align-items: center; padding: 2px 22px 0 5px; color: #484644; }
.status button { font-size: 19px; font-weight: 600; line-height: 20px; color: #605e5c; }
.zoom { appearance: none; width: 125px; height: 14px; margin: 0 6px; background: linear-gradient(#605e5c, #605e5c) center / 100% 1px no-repeat, linear-gradient(#605e5c, #605e5c) center / 1px 8px no-repeat; }
.zoom::-webkit-slider-thumb { appearance: none; width: 5px; height: 13px; background: #605e5c; }
.pct { margin: 0 24px 0 16px; color: #797775; }

.taskbar { height: 61px; background: #202020; border-top: 1px solid #000; color: #fff; display: grid; grid-template-columns: 1fr auto 1fr; align-items: center; }
.weather { display: flex; align-items: center; gap: 3px; padding-left: 23px; }
.weather b, .weather span { display: block; font-weight: 400; }
.weather span { color: #d0d0d0; }
.badge-text { font: 13px "Open Sans", sans-serif; text-anchor: middle; fill: #111; }
.apps { display: flex; align-items: center; gap: 5px; margin-left: 1px; }
.apps button { width: 50px; height: 50px; display: grid; place-items: center; border-radius: 6px; position: relative; }
.apps button svg { width: 30px; height: 30px; }
.search { width: 275px; height: 40px; border: 1px solid #5a5a5a; border-radius: 20px; background: #3c3c3c; display: flex; align-items: center; padding: 0 8px 0 14px; gap: 11px; }
.search input { flex: 1; min-width: 0; border: 0; background: none; font: 16px "Open Sans", sans-serif; padding: 0; }
.search input::placeholder { color: #d6d6d6; }
.wa i { position: absolute; right: 4px; top: 4px; width: 22px; height: 20px; border-radius: 10px; background: #4cc2ff; color: #111; font-style: normal; font-size: 13px; text-align: center; }
.ij { font: bold 10px "Liberation Mono", monospace; fill: #fff; }
.apps .running { background: #2e2e2e; }
.running::after { content: ""; position: absolute; left: 15px; bottom: 0; width: 20px; height: 4px; border-radius: 2px; background: #4cc2ff; }
.tray { display: flex; align-items: center; justify-content: flex-end; padding-right: 25px; gap: 10px; }
.tray .cloud { margin: 0 13px 0 12px; }
.lang { text-align: center; margin-right: 12px; }
.tray time { text-align: right; margin: 0 4px 0 11px; }
```
FILE: charts.js
```js
// Readings before September 2020, as x,y pairs on the full chart's grid.
const early = `271,715 275,700 280,600 288,704 298,713 303,614 312,709 320,708 332,692 336,678 340,712 344,660 363,652 368,667 372,621 377,716 381,668 395,715 404,545 413,655 418,440 427,706 432,550 437,710 445,640 450,712 459,714 464,641 469,710 474,670 478,695 483,655 495,690 501,718 505,632 515,715 524,714 533,702 537,710 542,365 551,314 556,703 561,709 565,672 570,716 574,595 579,683 584,279 588,670 598,224 602,680 608,585 616,585 625,710 629,667 639,705 648,675 653,643 662,713 666,712 671,570 676,716 685,598 694,693 699,665 708,648 717,555 722,655 727,665 736,632 740,718 745,640 750,560 754,198 758,695 763,577 777,704 781,620 786,680 791,628 795,712 800,692 809,690 818,711 827,658 832,655 841,568 846,705 851,449 855,645 860,647 868,718 873,668 883,692 892,670 901,711 908,600 914,568 919,618 924,463 928,702 937,590 942,423 951,660 956,267 961,693 975,715 979,590 984,683 988,382 993,716 1002,625 1008,640 1015,553 1021,693 1025,525 1030,710 1034,711 1039,550 1043,690 1048,717 1053,650 1058,687 1066,580 1071,422 1076,670 1080,610 1085,675 1090,678 1094,709 1099,640 1103,623 1108,676 1112,672 1121,590 1131,502 1140,687 1145,670 1154,713 1163,598 1168,697 1181,557 1191,714 1200,642 1209,702 1214,388 1223,520 1232,673 1241,597 1250,690 1255,703 1259,690 1264,708 1269,700 1273,710 1278,656 1292,711 1297,498 1301,680 1310,625 1315,705 1319,717 1325,690 1333,717 1338,452 1343,695 1348,482 1361,447 1366,685 1370,700 1379,626 1384,716 1388,400 1393,341 1398,587 1407,427 1412,645 1421,467 1426,713 1435,356 1440,605 1444,585 1448,655 1453,600 1458,695 1467,453 1476,650 1485,685 1494,620`;
const middle = `58,525 67,600 72,714 77,645 82,690 90,635 95,625 100,388 108,665 118,685 124,690 132,716 140,630 146,533 155,711 160,553 165,702 173,665 179,274 183,708 192,643 197,673 205,665 210,556 215,712 219,712 224,509 229,694 238,505 247,482 252,676 257,505 266,692 270,455 275,442 280,444 284,552 293,595 298,716 302,712 307,497 311,685 316,547 321,680 330,714 335,350 339,270 344,254 348,627 353,525 358,702 367,364 371,610 376,425 380,668 385,480 394,503 402,515 404,615 413,377 418,620 427,673 432,570 436,684 445,325 449,680 454,711 463,660 468,436 473,610 477,300 482,610 487,665 496,647 504,679 509,600 514,571 520,595 532,711 537,511 541,670 546,701 560,655 564,449 569,580 574,565 579,354 588,510 597,652 606,458 611,665 615,681 625,521 629,686 634,655 638,650 643,445 656,403 661,412 666,711 671,463 675,655 688,540 693,597 698,550 707,587 720,568 726,511 730,695 740,455 744,665 754,627 762,662 767,536 776,615 790,602 795,592 799,680 803,618 808,622 813,698 818,658 822,670 827,600 831,585 836,690 841,380 845,712 854,553 859,627 864,625 868,550 873,647 877,485 886,455 891,628 896,482 905,505 914,710 923,400 928,342 937,708 941,655 951,704 960,342 965,580 978,702 983,630 992,680 1001,468 1015,560 1024,660 1029,595 1034,640 1038,645 1043,701 1049,660 1057,652 1066,414 1070,678 1078,596 1084,675 1089,502 1093,555 1098,495 1102,645 1112,657 1117,610 1125,398 1135,706 1148,385 1158,683 1167,680 1176,645 1181,687 1186,557 1190,602 1208,392 1213,678 1218,492 1222,670 1231,706 1241,544 1245,646 1250,525 1254,580 1259,583 1264,642 1273,443 1277,515 1282,462 1287,652 1291,543 1300,666 1310,625 1314,617 1319,613 1324,443 1329,610 1337,415 1342,425 1346,690 1351,702`;
const late = `35,353 40,730 49,773 57,619 68,778 72,686 77,803 86,565 95,780 99,657 104,660 111,640 118,519 123,770 131,672 136,728 141,690 150,727 155,690 160,765 165,671 170,680 183,788 191,710 196,560 205,655 214,744 219,563 229,770 233,690 238,794 242,216 251,768 260,250 265,775 270,530 275,750 284,783 288,398 297,776 306,598`;

// One reading per day from 1 September 2020; 809 is zero and 57 units are 1K.
const daily = [713,133,678,377,772,640,503,642,428,599,403,750,803,490,297,695,459,634,656,335,748,268,591,351,672,696,714,732,608,749,600,384,625,802,369,680,617,750,667,795,600,420,271,771,716,592,776,670,570,659,467,493,543,770,740,710,695,748,802,485,768,625,342,448,422,625,436,640,787,675,535,639,510,352,720,775,470,253,625,329,573,608,799,672,427,550,475,670,625,780,390,372,393,635,592,645,798,570,365,257,345,281,480,682,451,635,515,375,202,581,528,511,361,375,348,252,697,683,432,597,648,638];
const upper = [638,290,345,415,374,410,388,443,451,456,411];
const lower = [638,740,805,866,825,861,838,895,903,906,863];
const mid = [638,512,585,640,604,632,615,670,678,680,640];
const forecastStart = 120;

const shift = (text, dx, dy) => text.split(" ").map(p => { const [x, y] = p.split(",").map(Number); return [x + dx, y + dy]; });
const fullPoint = (y, day) => [3076 + 4.6 * day, 719.5 - (809 - y) / 57 * 55.7];
const zoomPoint = (y, day) => [355 + 8.8 * day, 560 + y / 3];
const draw = (id, points) => document.getElementById(id).setAttribute("points", points.map(p => p.map(n => n.toFixed(1)).join()).join(" "));
const forecast = (list, at) => list.map((y, i) => at(y, forecastStart + i));

draw("fullLine", [...shift(early, 0, 0), ...shift(middle, 1440, 0), ...shift(late, 2760, -90), ...daily.map((y, i) => fullPoint(y, i - 1))]);
draw("zoomLine", daily.map((y, i) => zoomPoint(y, i - 1)));
for (const [prefix, at] of [["full", fullPoint], ["zoom", zoomPoint]]) {
  draw(prefix + "Band", [...forecast(upper, at), ...forecast(lower, at).reverse()]);
  draw(prefix + "Mid", forecast(mid, at));
}
```
